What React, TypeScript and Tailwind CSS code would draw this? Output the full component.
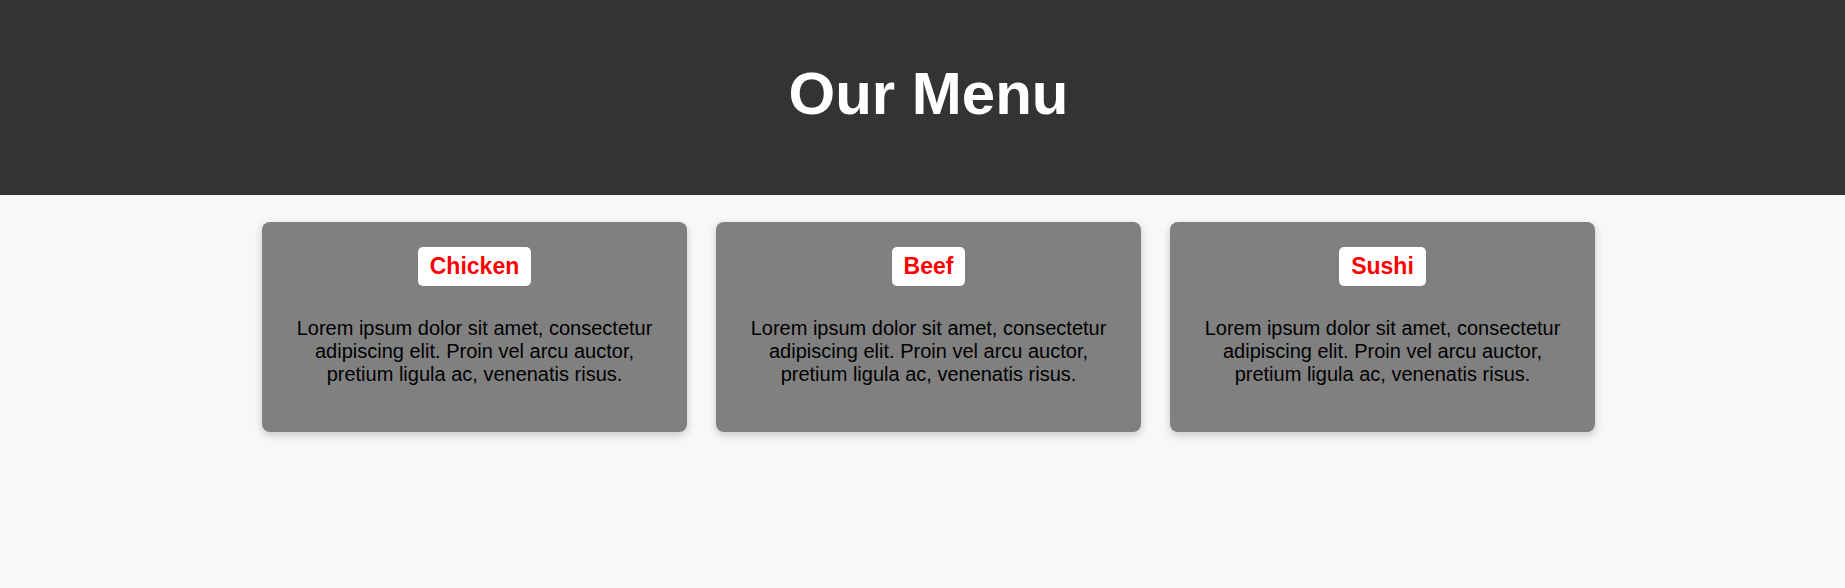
const items = [
  { name: 'Chicken' },
  { name: 'Beef' },
  { name: 'Sushi' },
];

const blurb =
  'Lorem ipsum dolor sit amet, consectetur adipiscing elit. Proin vel arcu auctor, pretium ligula ac, venenatis risus.';

export default function App() {
  return (
    <div className="min-h-screen bg-[#f8f8f8] font-['Liberation_Sans',Arial,sans-serif]">
      <header className="bg-[#333333] h-[195px] flex items-center justify-center pb-[8px] pl-[12px]">
        <h1 className="text-white font-bold text-[60px] leading-none">Our Menu</h1>
      </header>

      <main className="flex justify-center gap-[29px] pt-[27px] pl-[12px]">
        {items.map((item) => (
          <div
            key={item.name}
            className="w-[425px] h-[210px] bg-[#808080] rounded-[8px] shadow-[0_3px_9px_rgba(0,0,0,0.2)] flex flex-col items-center pt-[25px] px-[20px]"
          >
            <h2 className="bg-white text-[#ff0000] font-bold text-[23px] leading-[25px] rounded-[5px] px-[12px] py-[7px]">
              {item.name}
            </h2>
            <p className="mt-[31px] text-black text-[20px] leading-[23px] text-center">{blurb}</p>
          </div>
        ))}
      </main>
    </div>
  );
}
